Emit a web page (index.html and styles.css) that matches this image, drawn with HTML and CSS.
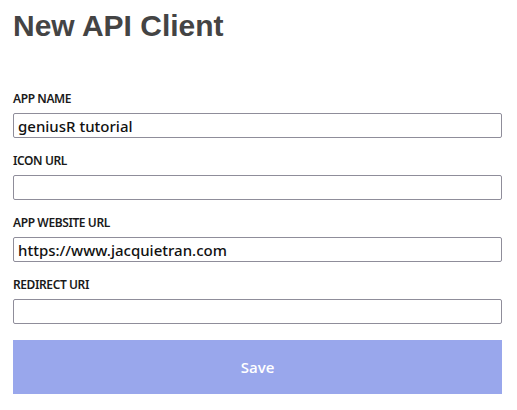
FILE: index.html
```html
<!DOCTYPE html>
<html>
<head>
<meta charset="utf-8">
<link rel="stylesheet" href="styles.css">
</head>
<body>
<div class="page">
  <h1 class="title">New API Client</h1>
  <form class="form">
    <div class="field">
      <label class="label">APP NAME</label>
      <input class="input" type="text" value="geniusR tutorial">
    </div>
    <div class="field">
      <label class="label">ICON URL</label>
      <input class="input" type="text" value="">
    </div>
    <div class="field">
      <label class="label">APP WEBSITE URL</label>
      <input class="input" type="text" value="https://www.jacquietran.com">
    </div>
    <div class="field">
      <label class="label">REDIRECT URI</label>
      <input class="input" type="text" value="">
    </div>
    <button class="save" type="button">Save</button>
  </form>
</div>
</body>
</html>
```

FILE: styles.css
```css
html, body { margin: 0; padding: 0; background: #fff; }
.page { padding: 9px 15px 0 13px; }
.title {
  font-family: "Liberation Sans", Arial, sans-serif;
  font-weight: bold;
  font-size: 30px;
  color: #444;
  margin: 0;
  line-height: 34px;
}
.form { display: flex; flex-direction: column; margin-top: 49px; }
.field { display: flex; flex-direction: column; gap: 7px; margin-bottom: 16px; }
.label {
  font-family: "Noto Sans", sans-serif;
  font-size: 12px;
  font-weight: 600;
  color: #1a1a1a;
  line-height: 14px;
  letter-spacing: -0.4px;
}
.input {
  box-sizing: border-box;
  width: 489px;
  height: 25px;
  margin: 0;
  border: 1px solid #8f8d9a;
  border-radius: 2px;
  padding: 0 4px;
  font-family: "Noto Sans", sans-serif;
  font-size: 15px;
  font-weight: 500;
  color: #111;
  outline: none;
}
.save {
  width: 489px;
  height: 54px;
  margin: 0;
  background: #99a7ec;
  border: none;
  color: #fff;
  font-family: "Open Sans", sans-serif;
  font-weight: 600;
  font-size: 15px;
}
```
